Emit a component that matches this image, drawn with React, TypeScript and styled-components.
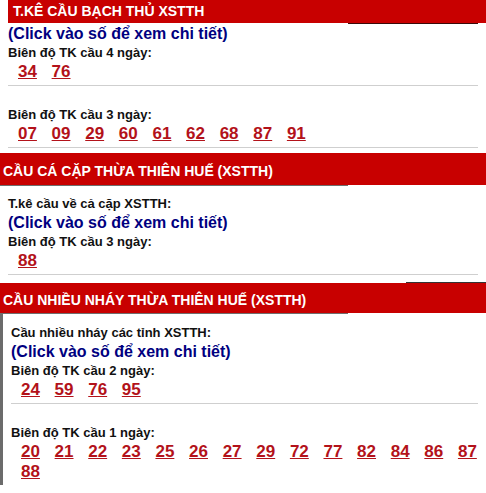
import React from 'react'
import styled, { createGlobalStyle } from 'styled-components'

const GlobalStyle = createGlobalStyle`
  html, body { margin: 0; padding: 0; background: #fff; }
  body { font-family: Arial, "Liberation Sans", sans-serif; }
`

interface IBlock { label: string, nums: string[] }
interface IPanel { title: string, intro?: string, blocks: IBlock[] }

const panels: IPanel[] = [
  {
    title: 'T.KÊ CẦU BẠCH THỦ XSTTH',
    blocks: [
      { label: 'Biên độ TK cầu 4 ngày:', nums: ['34', '76'] },
      { label: 'Biên độ TK cầu 3 ngày:', nums: ['07', '09', '29', '60', '61', '62', '68', '87', '91'] }
    ]
  },
  {
    title: 'CẦU CÁ CẶP THỪA THIÊN HUẾ (XSTTH)',
    intro: 'T.kê cầu về cả cặp XSTTH:',
    blocks: [
      { label: 'Biên độ TK cầu 3 ngày:', nums: ['88'] }
    ]
  },
  {
    title: 'CẦU NHIỀU NHÁY THỪA THIÊN HUẾ (XSTTH)',
    intro: 'Cầu nhiều nháy các tỉnh XSTTH:',
    blocks: [
      { label: 'Biên độ TK cầu 2 ngày:', nums: ['24', '59', '76', '95'] },
      { label: 'Biên độ TK cầu 1 ngày:', nums: ['20', '21', '22', '23', '25', '26', '27', '29', '72', '77', '82', '84', '86', '87', '88'] }
    ]
  }
]

const Page = styled.div`
  width: 486px;
  height: 493px;
  overflow: hidden;
  display: flex;
  flex-direction: column;
`

const FirstHeader = styled.div`
  margin-left: 8px;
  height: 23px;
  line-height: 23px;
  padding-left: 5px;
  background: #c80000;
  color: #fff;
  font-size: 14px;
  font-weight: bold;
  white-space: nowrap;
`

const Header = styled.div<{ h: number }>`
  height: ${(p) => p.h}px;
  box-sizing: border-box;
  padding: 4px 0 0 3px;
  line-height: ${(p) => p.h - 4}px;
  background: #c80000;
  color: #fff;
  font-size: 14px;
  font-weight: bold;
  white-space: nowrap;
`

const EdgeLine = styled.div<{ left: number, w: number, color: string }>`
  height: 1px;
  margin-left: ${(p) => p.left}px;
  width: ${(p) => p.w}px;
  background: ${(p) => p.color};
`

const HeaderShade = styled.div`
  height: 1px;
  width: 348px;
  background: #6e6e6e;
`

const Body = styled.div<{ pl: number, pt: number, bordered?: boolean }>`
  padding: ${(p) => p.pt}px 8px 0 ${(p) => p.pl}px;
  border-left: ${(p) => (p.bordered ? '3px solid #6b6b6b' : 'none')};
  padding-bottom: ${(p) => (p.bordered ? '3px' : '0')};
`

const Intro = styled.div`
  font-size: 13px;
  font-weight: bold;
  line-height: 18px;
  color: #111;
`

const ClickNote = styled.div`
  font-size: 16px;
  font-weight: bold;
  line-height: 20px;
  color: #000080;
`

const Label = styled.div`
  font-size: 13px;
  font-weight: bold;
  line-height: 18px;
  color: #111;
`

const NumRow = styled.div`
  display: flex;
  flex-wrap: wrap;
  column-gap: 14.7px;
  padding-left: 10px;
  line-height: 20px;
`

const Num = styled.a`
  font-size: 17px;
  font-weight: bold;
  color: #b3121a;
  text-decoration: underline;
  cursor: pointer;
`

const Divider = styled.div`
  height: 1px;
  margin-top: 3px;
  background: #cfcfcf;
`

const Spacer = styled.div<{ h: number }>`
  height: ${(p) => p.h}px;
`

function Block({ block, first, last }: { block: IBlock, first: boolean, last: boolean }) {
  return (
    <div>
      {!first && <Spacer h={20} />}
      <Label>{block.label}</Label>
      <NumRow>
        {block.nums.map((n, i) => <Num key={i}>{n}</Num>)}
      </NumRow>
      {!last && <Divider />}
    </div>
  )
}

export default function App() {
  const [p1, p2, p3] = panels
  return (
    <Page>
      <GlobalStyle />
      <FirstHeader>{p1.title}</FirstHeader>
      <EdgeLine left={348} w={130} color="#3a0a0a" />
      <Body pl={8} pt={0}>
        <ClickNote>(Click vào số để xem chi tiết)</ClickNote>
        {p1.blocks.map((b, i) => <Block key={i} block={b} first={i === 0} last={false} />)}
      </Body>
      <Spacer h={5} />
      <Header h={32}>{p2.title}</Header>
      <HeaderShade />
      <Body pl={8} pt={9}>
        <Intro>{p2.intro}</Intro>
        <ClickNote>(Click vào số để xem chi tiết)</ClickNote>
        {p2.blocks.map((b, i) => <Block key={i} block={b} first={i === 0} last={false} />)}
      </Body>
      <Spacer h={7} />
      <EdgeLine left={406} w={80} color="#333" />
      <Header h={30}>{p3.title}</Header>
      <HeaderShade />
      <Body pl={8} pt={10} bordered>
        <Intro>{p3.intro}</Intro>
        <ClickNote>(Click vào số để xem chi tiết)</ClickNote>
        {p3.blocks.map((b, i) => (
          <Block key={i} block={b} first={i === 0} last={i === p3.blocks.length - 1} />
        ))}
      </Body>
    </Page>
  )
}
